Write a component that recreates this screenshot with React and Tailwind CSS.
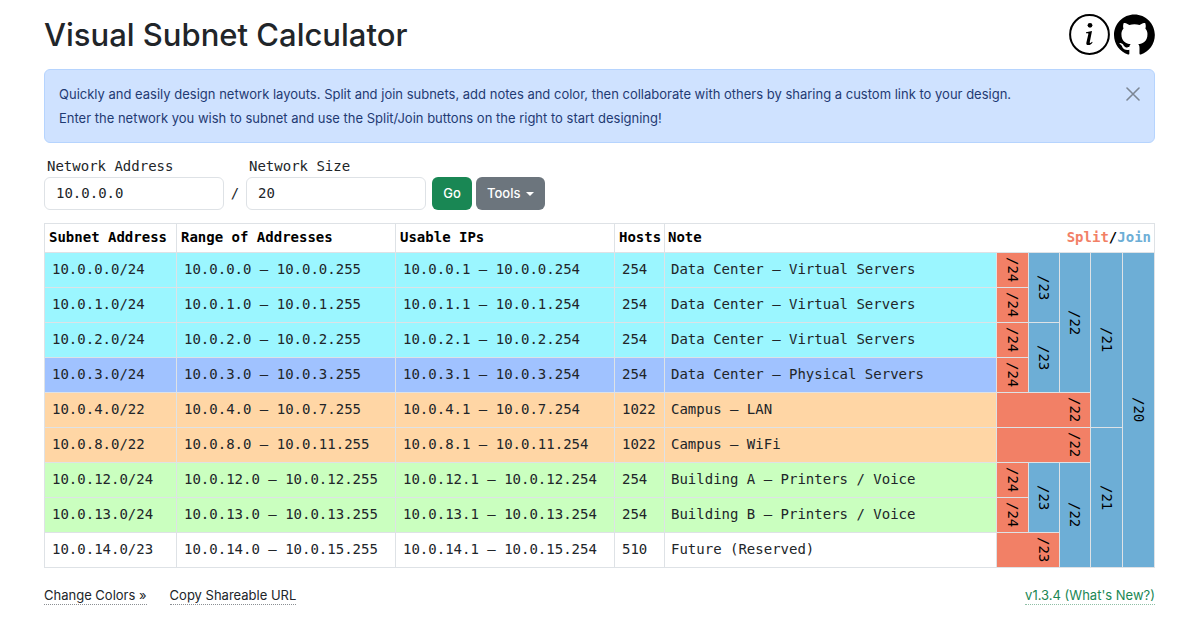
const CYAN = 'bg-[#9bf6ff]'
const BLUE = 'bg-[#a0c2ff]'
const ORANGE = 'bg-[#ffd6a5]'
const GREEN = 'bg-[#caffbf]'

// Each row lists its cells on the right: one split button, then the join buttons that start here.
const rows = [
  { subnet: '10.0.0.0/24', range: '10.0.0.0 – 10.0.0.255', usable: '10.0.0.1 – 10.0.0.254', hosts: 254, note: 'Data Center – Virtual Servers', color: CYAN,
    split: ['/24', 1], joins: [['/23', 2], ['/22', 4], ['/21', 5], ['/20', 9]] },
  { subnet: '10.0.1.0/24', range: '10.0.1.0 – 10.0.1.255', usable: '10.0.1.1 – 10.0.1.254', hosts: 254, note: 'Data Center – Virtual Servers', color: CYAN,
    split: ['/24', 1], joins: [] },
  { subnet: '10.0.2.0/24', range: '10.0.2.0 – 10.0.2.255', usable: '10.0.2.1 – 10.0.2.254', hosts: 254, note: 'Data Center – Virtual Servers', color: CYAN,
    split: ['/24', 1], joins: [['/23', 2]] },
  { subnet: '10.0.3.0/24', range: '10.0.3.0 – 10.0.3.255', usable: '10.0.3.1 – 10.0.3.254', hosts: 254, note: 'Data Center – Physical Servers', color: BLUE,
    split: ['/24', 1], joins: [] },
  { subnet: '10.0.4.0/22', range: '10.0.4.0 – 10.0.7.255', usable: '10.0.4.1 – 10.0.7.254', hosts: 1022, note: 'Campus – LAN', color: ORANGE,
    split: ['/22', 3], joins: [] },
  { subnet: '10.0.8.0/22', range: '10.0.8.0 – 10.0.11.255', usable: '10.0.8.1 – 10.0.11.254', hosts: 1022, note: 'Campus – WiFi', color: ORANGE,
    split: ['/22', 3], joins: [['/21', 4]] },
  { subnet: '10.0.12.0/24', range: '10.0.12.0 – 10.0.12.255', usable: '10.0.12.1 – 10.0.12.254', hosts: 254, note: 'Building A – Printers / Voice', color: GREEN,
    split: ['/24', 1], joins: [['/23', 2], ['/22', 3]] },
  { subnet: '10.0.13.0/24', range: '10.0.13.0 – 10.0.13.255', usable: '10.0.13.1 – 10.0.13.254', hosts: 254, note: 'Building B – Printers / Voice', color: GREEN,
    split: ['/24', 1], joins: [] },
  { subnet: '10.0.14.0/23', range: '10.0.14.0 – 10.0.15.255', usable: '10.0.14.1 – 10.0.15.254', hosts: 510, note: 'Future (Reserved)', color: 'bg-white',
    split: ['/23', 2], joins: [] },
]

const MONO = "font-['DejaVu_Sans_Mono',monospace]"
const CELL = 'border border-[#dee2e6] px-[7px] pt-0 pb-[2px]'
const HEAD = 'border border-[#dee2e6] px-1 pt-0 pb-[2px] text-left font-bold'

function InfoIcon() {
  return (
    <svg width="41" height="41" viewBox="0 0 41 41" aria-hidden="true">
      <circle cx="20.5" cy="20.5" r="19.4" fill="none" stroke="currentColor" strokeWidth="2" />
      <circle cx="21" cy="11.3" r="2.4" fill="currentColor" />
      <path fill="currentColor" d="M17 18.2 23 17 20.8 28c-.2.9.1 1.2.6 1 .6-.2 1.1-.7 1.6-1.3l.6.5c-1 1.6-2.3 2.9-4.2 2.9-1.8 0-2.4-1-2-2.7l1.9-8.1c.2-.8 0-1.1-.7-1.1H17z" />
    </svg>
  )
}

function GitHubMark() {
  return (
    <svg width="41" height="41" viewBox="0 0 98 96" fill="currentColor" aria-hidden="true">
      <path fillRule="evenodd" clipRule="evenodd" d="M48.854 0C21.839 0 0 22 0 49.217c0 21.756 13.993 40.172 33.405 46.69 2.427.49 3.316-1.059 3.316-2.362 0-1.141-.08-5.052-.08-9.127-13.59 2.934-16.42-5.867-16.42-5.867-2.184-5.704-5.42-7.17-5.42-7.17-4.448-3.015.324-3.015.324-3.015 4.934.326 7.523 5.052 7.523 5.052 4.367 7.496 11.404 5.378 14.235 4.074.404-3.178 1.699-5.378 3.074-6.6-10.839-1.141-22.243-5.378-22.243-24.283 0-5.378 1.94-9.778 5.014-13.2-.485-1.222-2.184-6.275.486-13.038 0 0 4.125-1.304 13.426 5.052a46.97 46.97 0 0 1 12.214-1.63c4.125 0 8.33.571 12.213 1.63 9.302-6.356 13.427-5.052 13.427-5.052 2.67 6.763.97 11.816.485 13.038 3.155 3.422 5.015 7.822 5.015 13.2 0 18.905-11.404 23.06-22.324 24.283 1.78 1.548 3.316 4.481 3.316 9.126 0 6.6-.08 11.897-.08 13.526 0 1.304.89 2.853 3.316 2.364 19.412-6.52 33.405-24.935 33.405-46.691C97.707 22 75.788 0 48.854 0z" />
    </svg>
  )
}

function Field({ id, label, value }) {
  return (
    <div className="flex w-[180px] flex-col">
      <label htmlFor={id} className="px-[3px] pb-px text-sm leading-5">{label}</label>
      <input id={id} defaultValue={value} className="h-[33px] w-full rounded-md border border-[#dee2e6] bg-white px-[11px] pb-[2px] text-sm" />
    </div>
  )
}

function VerticalButton({ children }) {
  return (
    <button type="button" className="flex w-[30px] items-center justify-center [writing-mode:vertical-rl]">
      {children}
    </button>
  )
}

function SubnetTable() {
  return (
    <table className={`w-full table-fixed border-collapse text-sm leading-5 whitespace-nowrap ${MONO}`}>
      <colgroup>
        <col className="w-[132px]" />
        <col className="w-[219px]" />
        <col className="w-[219px]" />
        <col className="w-[50px]" />
        <col />
        <col className="w-8" />
        <col className="w-[31px]" />
        <col className="w-[31px]" />
        <col className="w-8" />
        <col className="w-8" />
      </colgroup>
      <thead>
        <tr className="h-[29px] text-black">
          <th className={HEAD}>Subnet Address</th>
          <th className={HEAD}>Range of Addresses</th>
          <th className={HEAD}>Usable IPs</th>
          <th className={HEAD}>Hosts</th>
          <th className="border-y border-l border-[#dee2e6] px-[3px] pt-0 pb-[2px] text-left font-bold">Note</th>
          <th colSpan={5} className="border-y border-r border-[#dee2e6] px-[3px] pt-0 pb-[2px] text-right font-bold">
            <span className="text-[#f28066]">Split</span>/<span className="text-[#6daed6]">Join</span>
          </th>
        </tr>
      </thead>
      <tbody>
        {rows.map((row) => (
          <tr key={row.subnet} className={`h-[35px] ${row.color}`}>
            <td className={CELL}>{row.subnet}</td>
            <td className={CELL}>{row.range}</td>
            <td className={CELL}>{row.usable}</td>
            <td className={CELL}>{row.hosts}</td>
            <td className="border border-[#dee2e6] p-0 pb-[2px]">
              <input aria-label={`Note for ${row.subnet}`} defaultValue={row.note} className="block w-full bg-transparent px-[6px]" />
            </td>
            <td colSpan={row.split[1]} className="border border-[#dee2e6] bg-[#f28066] p-0 text-black">
              <div className="flex justify-end">
                <VerticalButton>{row.split[0]}</VerticalButton>
              </div>
            </td>
            {row.joins.map(([label, span]) => (
              <td key={label} rowSpan={span} className="border border-[#dee2e6] bg-[#6daed6] p-0 text-black">
                <div className="flex justify-end">
                  <VerticalButton>{label}</VerticalButton>
                </div>
              </td>
            ))}
          </tr>
        ))}
      </tbody>
    </table>
  )
}

export default function App() {
  return (
    <main className="pt-[14px] pr-[45px] pb-6 pl-11 font-[Inter,sans-serif] text-[13px] text-[#212529]">
      <header className="flex items-start justify-between">
        <h1 className="text-[31px] leading-[42px] font-medium">Visual Subnet Calculator</h1>
        <div className="flex gap-1 text-black">
          <button type="button" aria-label="About"><InfoIcon /></button>
          <a href="#github" aria-label="GitHub"><GitHubMark /></a>
        </div>
      </header>

      <section className="mt-[13px] flex items-start justify-between rounded-md border border-[#b6d4fe] bg-[#cfe2ff] px-[14px] py-3 text-[#1f3a73]">
        <p className="leading-6">
          Quickly and easily design network layouts. Split and join subnets, add notes and color, then collaborate with others by sharing a custom link to your design.
          <br />
          Enter the network you wish to subnet and use the Split/Join buttons on the right to start designing!
        </p>
        <button type="button" aria-label="Close" className="mt-[5px] text-[#7c8694]">
          <svg width="14" height="14" viewBox="0 0 14 14" fill="none" stroke="currentColor" strokeWidth="1.6" strokeLinecap="round">
            <path d="M1 1 13 13M13 1 1 13" />
          </svg>
        </button>
      </section>

      <form className="mt-[13px] flex items-end" onSubmit={(e) => e.preventDefault()}>
        <div className={`flex items-end text-sm ${MONO}`}>
          <Field id="network" label="Network Address" value="10.0.0.0" />
          <span className="w-[22px] text-center leading-[33px]">/</span>
          <Field id="size" label="Network Size" value="20" />
        </div>
        <button type="submit" className="ml-[6px] h-[33px] w-10 rounded-md bg-[#198754] font-medium text-white">Go</button>
        <button type="button" className="ml-1 flex h-[33px] items-center gap-[6px] rounded-md bg-[#6c757d] px-[11px] font-medium text-white">
          Tools
          <svg width="8" height="4" viewBox="0 0 8 4" fill="currentColor"><path d="M0 0h8L4 4z" /></svg>
        </button>
      </form>

      <div className="mt-[13px]">
        <SubnetTable />
      </div>

      <footer className="mt-[19px] flex justify-between leading-[17px]">
        <div className="flex gap-[23px]">
          <a href="#colors" className="border-b border-dotted border-[#8b8f93]">Change Colors »</a>
          <a href="#share" className="border-b border-dotted border-[#8b8f93]">Copy Shareable URL</a>
        </div>
        <a href="#releases" className="border-b border-dotted border-[#8fbfa6] text-[#198754]">v1.3.4 (What's New?)</a>
      </footer>
    </main>
  )
}
